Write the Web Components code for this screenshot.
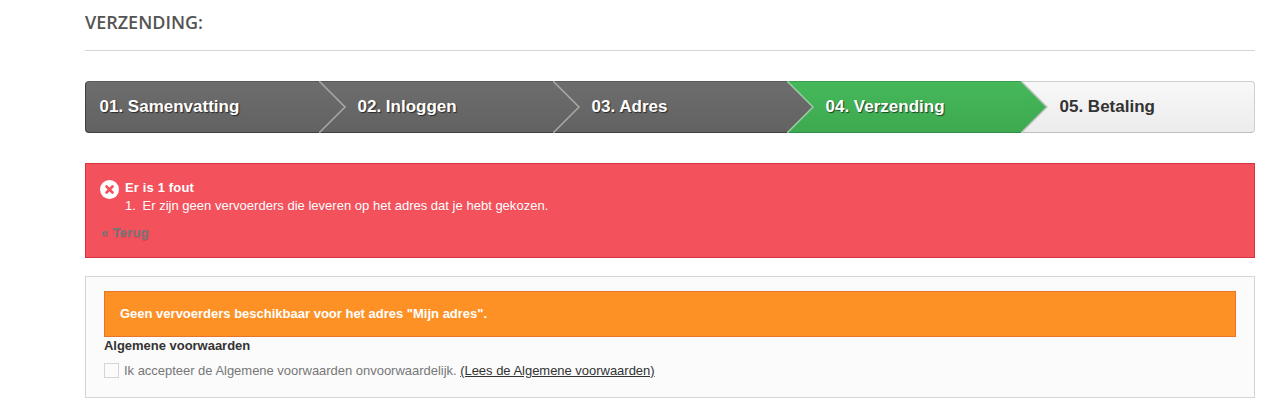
<!DOCTYPE html>
<html lang="nl">
<head>
<meta charset="utf-8">
<title>Verzending</title>
<style>
    html, body { margin: 0; background: #fff; }
    body { font-family: "Liberation Sans", Arial, sans-serif; }
</style>
</head>
<body>

<template id="checkout-page-temp">
    <style>
        :host { display: block; width: 1170px; margin-left: 85px; height: 415px; overflow: hidden; }
    </style>
    <slot></slot>
</template>

<template id="page-heading-temp">
    <style>
        :host {
            display: block;
            height: 50px;
            box-sizing: content-box;
            border-bottom: 1px solid #d6d4d4;
            font: 600 18px/44px "Open Sans", sans-serif;
            color: #555454;
            margin-bottom: 30px;
        }
    </style>
    <slot></slot>
</template>

<template id="step-bar-temp">
    <style>
        :host { display: flex; height: 52px; margin-bottom: 30px; }
    </style>
    <slot></slot>
</template>

<template id="step-item-temp">
    <style>
        :host {
            --step-bg: linear-gradient(#6e6d6d, #636262);
            display: flex;
            align-items: center;
            position: relative;
            flex: 0 0 234px;
            box-sizing: border-box;
            height: 52px;
            padding-left: 38.5px;
            font: bold 17px/20px "Liberation Sans", Arial, sans-serif;
            color: #fff;
            text-shadow: 1px 1px 1px rgba(0, 0, 0, 0.6);
            background: var(--step-bg);
            border-top: 1px solid #5a5a5a;
            border-bottom: 1px solid #3f3f3f;
        }
        :host([state="current"]) {
            --step-bg: linear-gradient(#45b85a, #3ea950);
            border-top-color: #3a9f4c;
            border-bottom-color: #2f8f42;
        }
        :host([state="todo"]) {
            --step-bg: linear-gradient(#f8f8f8, #ececec);
            color: #333;
            text-shadow: none;
            border-top-color: #cfcfcf;
            border-bottom-color: #bdbdbd;
            border-right: 1px solid #cfcfcf;
            border-radius: 0 4px 4px 0;
        }
        :host([first]) {
            padding-left: 13.5px;
            border-left: 1px solid #3f3f3f;
            border-radius: 4px 0 0 4px;
        }
        /* arrow lies over the start of the next step */
        .arrow { position: absolute; left: 100%; top: -1px; width: 28px; height: 52px; z-index: 1; }
        .arrow div {
            height: 100%;
            background: var(--step-bg);
            clip-path: polygon(0 0, 26px 26px, 0 52px);
        }
        .arrow svg { position: absolute; left: 0; top: 0; width: 28px; height: 52px; }
        :host([state="todo"]) .arrow { display: none; }
        .edge { fill: none; stroke: #a9a9a9; stroke-width: 1.5; }
        :host([state="current"]) .edge { stroke: #c4c4c4; }
        :host([state="before-current"]) .edge { stroke: #9ccca6; }
    </style>
    <slot></slot>
    <span class="arrow">
        <div></div>
        <svg viewBox="0 0 28 52" aria-hidden="true">
            <path class="edge" d="M0 0 L26 26 L0 52"></path>
        </svg>
    </span>
</template>

<template id="error-alert-temp">
    <style>
        :host {
            display: block;
            box-sizing: border-box;
            height: 95px;
            margin-bottom: 18px;
            padding: 15px 14px 0;
            background: #f3515c;
            border: 1px solid #d4323d;
            color: #fff;
            font: 13px/18px "Liberation Sans", Arial, sans-serif;
            text-shadow: 0 1px rgba(0, 0, 0, 0.05);
        }
        .head { display: flex; align-items: center; gap: 6px; height: 18px; font-weight: bold; letter-spacing: 0.15px; }
        svg { width: 19px; height: 19px; margin-top: 2px; flex: none; }
        .msg { padding-left: 25px; letter-spacing: 0.015px; }
        .msg span { margin-right: 3px; }
        .back {
            display: block;
            margin: 8px 0 0 1px;
            font-weight: bold;
            font-size: 13.5px;
            line-height: 20px;
            color: #777;
            text-shadow: 0 1px rgba(0, 0, 0, 0.12);
        }
    </style>
    <div class="head">
        <svg viewBox="0 0 19 19" aria-hidden="true">
            <circle cx="9.5" cy="9.5" r="9.5" fill="#fff"></circle>
            <path d="M6.5 6.5 L12.5 12.5 M12.5 6.5 L6.5 12.5" stroke="#f3515c" stroke-width="2.6" stroke-linecap="round"></path>
        </svg>
        <slot name="title"></slot>
    </div>
    <div class="msg"><span>1.</span> <slot></slot></div>
    <a class="back"><slot name="back"></slot></a>
</template>

<template id="carrier-box-temp">
    <style>
        :host {
            display: block;
            box-sizing: border-box;
            height: 122px;
            padding: 14px 18px 0;
            background: #fbfbfb;
            border: 1px solid #d6d4d4;
            font: 13px/18px "Liberation Sans", Arial, sans-serif;
        }
    </style>
    <slot></slot>
</template>

<template id="warning-alert-temp">
    <style>
        :host {
            display: flex;
            align-items: center;
            box-sizing: border-box;
            height: 46px;
            padding-left: 15px;
            background: #fe9126;
            border: 1px solid #e4752b;
            color: #fff;
            font-weight: bold;
            font-size: 13px;
        }
    </style>
    <slot></slot>
</template>

<template id="terms-check-temp">
    <style>
        :host { display: block; color: #777; letter-spacing: -0.024px; }
        h3 { margin: 0 0 7px; font-size: 13px; line-height: 18px; font-weight: bold; color: #333; }
        label { display: flex; align-items: center; gap: 5px; height: 17px; }
        .box { width: 15px; height: 15px; box-sizing: border-box; border: 1px solid #d6d4d4; background: #fbfbfb; flex: none; }
        ::slotted(a) { color: #333; text-decoration: underline; }
    </style>
    <h3><slot name="title"></slot></h3>
    <label><span class="box"></span><span><slot></slot></span></label>
</template>

<page-shell>
    <page-heading>VERZENDING:</page-heading>
    <step-bar>
        <step-item first>01. Samenvatting</step-item>
        <step-item>02. Inloggen</step-item>
        <step-item state="before-current">03. Adres</step-item>
        <step-item state="current">04. Verzending</step-item>
        <step-item state="todo">05. Betaling</step-item>
    </step-bar>
    <error-alert>
        <span slot="title">Er is 1 fout</span>
        Er zijn geen vervoerders die leveren op het adres dat je hebt gekozen.
        <span slot="back">« Terug</span>
    </error-alert>
    <carrier-box>
        <warning-alert>Geen vervoerders beschikbaar voor het adres "Mijn adres".</warning-alert>
        <terms-check>
            <span slot="title">Algemene voorwaarden</span>
            Ik accepteer de Algemene voorwaarden onvoorwaardelijk. <a>(Lees de Algemene voorwaarden)</a>
        </terms-check>
    </carrier-box>
</page-shell>

<script>
    function register(tag, templateId) {
        customElements.define(tag, class extends HTMLElement {
            constructor() {
                super();
                this.attachShadow({ mode: 'open' });
                this.shadowRoot.appendChild(document.querySelector(templateId).content.cloneNode(true));
            }
        });
    }
    register('page-shell', '#checkout-page-temp');
    register('page-heading', '#page-heading-temp');
    register('step-bar', '#step-bar-temp');
    register('step-item', '#step-item-temp');
    register('error-alert', '#error-alert-temp');
    register('carrier-box', '#carrier-box-temp');
    register('warning-alert', '#warning-alert-temp');
    register('terms-check', '#terms-check-temp');
</script>
</body>
</html>
